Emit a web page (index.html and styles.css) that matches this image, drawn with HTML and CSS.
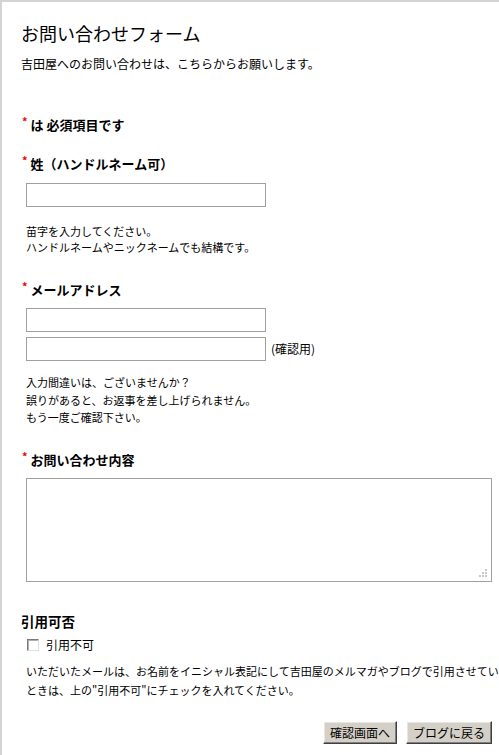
FILE: index.html
```html
<!DOCTYPE html>
<html lang="ja">
<head>
<meta charset="utf-8">
<title>お問い合わせフォーム</title>
<link rel="stylesheet" href="styles.css">
</head>
<body>
<div class="page">
  <h1 class="title">お問い合わせフォーム</h1>
  <p class="lead">吉田屋へのお問い合わせは、こちらからお願いします。</p>

  <p class="head head-note"><span class="req">*</span>は 必須項目です</p>

  <form class="form">
    <div class="field field-name">
      <label class="head"><span class="req">*</span>姓（ハンドルネーム可）</label>
      <input class="text" type="text">
      <p class="help help-name">苗字を入力してください。<br>ハンドルネームやニックネームでも結構です。</p>
    </div>

    <div class="field field-mail">
      <label class="head"><span class="req">*</span>メールアドレス</label>
      <input class="text" type="text">
      <div class="confirm-row">
        <input class="text" type="text"><span class="confirm-label">(確認用)</span>
      </div>
      <p class="help help-mail">入力間違いは、ございませんか？<br>誤りがあると、お返事を差し上げられません。<br>もう一度ご確認下さい。</p>
    </div>

    <div class="field field-body">
      <label class="head"><span class="req">*</span>お問い合わせ内容</label>
      <div class="area-wrap">
        <textarea class="area"></textarea>
        <svg class="grip" width="9" height="9" viewBox="0 0 9 9"><g fill="#c8c8c8"><rect x="6" y="0" width="2" height="2"/><rect x="3" y="3" width="2" height="2"/><rect x="6" y="3" width="2" height="2"/><rect x="0" y="6" width="2" height="2"/><rect x="3" y="6" width="2" height="2"/><rect x="6" y="6" width="2" height="2"/></g></svg>
      </div>
    </div>

    <div class="field field-quote">
      <p class="head head-plain">引用可否</p>
      <label class="check-row"><input class="check" type="checkbox"><span>引用不可</span></label>
      <p class="quote-note">いただいたメールは、お名前をイニシャル表記にして吉田屋のメルマガやブログで引用させてい<br>ときは、上の"引用不可"にチェックを入れてください。</p>
    </div>

    <div class="buttons">
      <button class="btn" type="button">確認画面へ</button>
      <button class="btn" type="button">ブログに戻る</button>
    </div>
  </form>
</div>
</body>
</html>
```

FILE: styles.css
```css
html, body {
  margin: 0;
  padding: 0;
  background: #fff;
  overflow: hidden;
}

body {
  font-family: "Noto Sans CJK JP", "Liberation Sans", sans-serif;
  color: #000;
}

.page {
  border-top: 2px solid #d4d4d4;
  border-left: 2px solid #d4d4d4;
  padding: 19px 7px 30px 19px;
  min-height: 760px;
  box-sizing: border-box;
}

.title {
  margin: 0;
  font-size: 18px;
  line-height: 24px;
  font-weight: normal;
}

.lead {
  margin: 11px 0 0;
  font-size: 12px;
  line-height: 16px;
}

.head {
  display: block;
  margin: 0;
  height: 16px;
  font-size: 13px;
  line-height: 16px;
  font-weight: bold;
}

.head-note {
  margin-top: 45px;
}

.req {
  position: relative;
  top: -4px;
  color: #e00;
  font-size: 11px;
  line-height: 0;
  margin-left: 1px;
  margin-right: 3px;
  font-weight: bold;
}

.form {
  margin: 0;
}

.field-name {
  margin-top: 23px;
}

.field-mail {
  margin-top: 27px;
}

.field-body {
  margin-top: 25px;
}

.field-quote {
  margin-top: 31px;
}

.text {
  display: block;
  box-sizing: border-box;
  width: 240px;
  height: 24px;
  margin: 11px 0 0 5px;
  border: 1px solid #a0a0a0;
  padding: 2px 4px;
  font: 12px "Noto Sans CJK JP", sans-serif;
  background: #fff;
}

.field-mail .text {
  margin-top: 10px;
}

.confirm-row {
  display: flex;
  align-items: center;
  margin-top: 5px;
}

.confirm-row .text {
  margin-top: 0;
}

.confirm-label {
  margin-left: 5px;
  font-size: 12px;
  line-height: 16px;
}

.help {
  margin: 0 0 0 5px;
  font-size: 11px;
  line-height: 16px;
}

.help-name {
  margin-top: 16px;
}

.help-mail {
  margin-top: 13px;
  line-height: 17.5px;
}

.area-wrap {
  position: relative;
  width: 466px;
  height: 104px;
  margin: 10px 0 0 5px;
}

.area {
  display: block;
  box-sizing: border-box;
  width: 466px;
  height: 104px;
  margin: 0;
  border: 1px solid #a0a0a0;
  padding: 2px;
  resize: none;
  font: 12px "Noto Sans CJK JP", sans-serif;
}

.grip {
  position: absolute;
  right: 4px;
  bottom: 4px;
}

.head-plain {
  font-size: 13.5px;
}

.check-row {
  display: flex;
  align-items: center;
  margin: 8px 0 0 5px;
  font-size: 12px;
  line-height: 16px;
}

.check {
  -webkit-appearance: none;
  appearance: none;
  box-sizing: border-box;
  width: 12px;
  height: 12px;
  margin: 0 7px 0 1px;
  background: #fff;
  border: 1px solid;
  border-color: #7a7a7a #e0e0e0 #e0e0e0 #7a7a7a;
  box-shadow: inset 1px 1px #b0b0b0;
}

.quote-note {
  margin: 9px 0 0 5px;
  font-size: 11px;
  line-height: 19px;
  white-space: nowrap;
}

.buttons {
  display: flex;
  justify-content: flex-end;
  gap: 9px;
  margin-top: 21px;
  padding-right: 0;
}

.btn {
  box-sizing: border-box;
  height: 23px;
  padding: 0 6px;
  font: 12px "Noto Sans CJK JP", sans-serif;
  color: #000;
  background: #d4d0c8;
  border: 1px solid;
  border-color: #fff #404040 #404040 #fff;
  box-shadow: inset -1px -1px #808080, inset 1px 1px #e8e6e0;
  border-radius: 0;
}
```
